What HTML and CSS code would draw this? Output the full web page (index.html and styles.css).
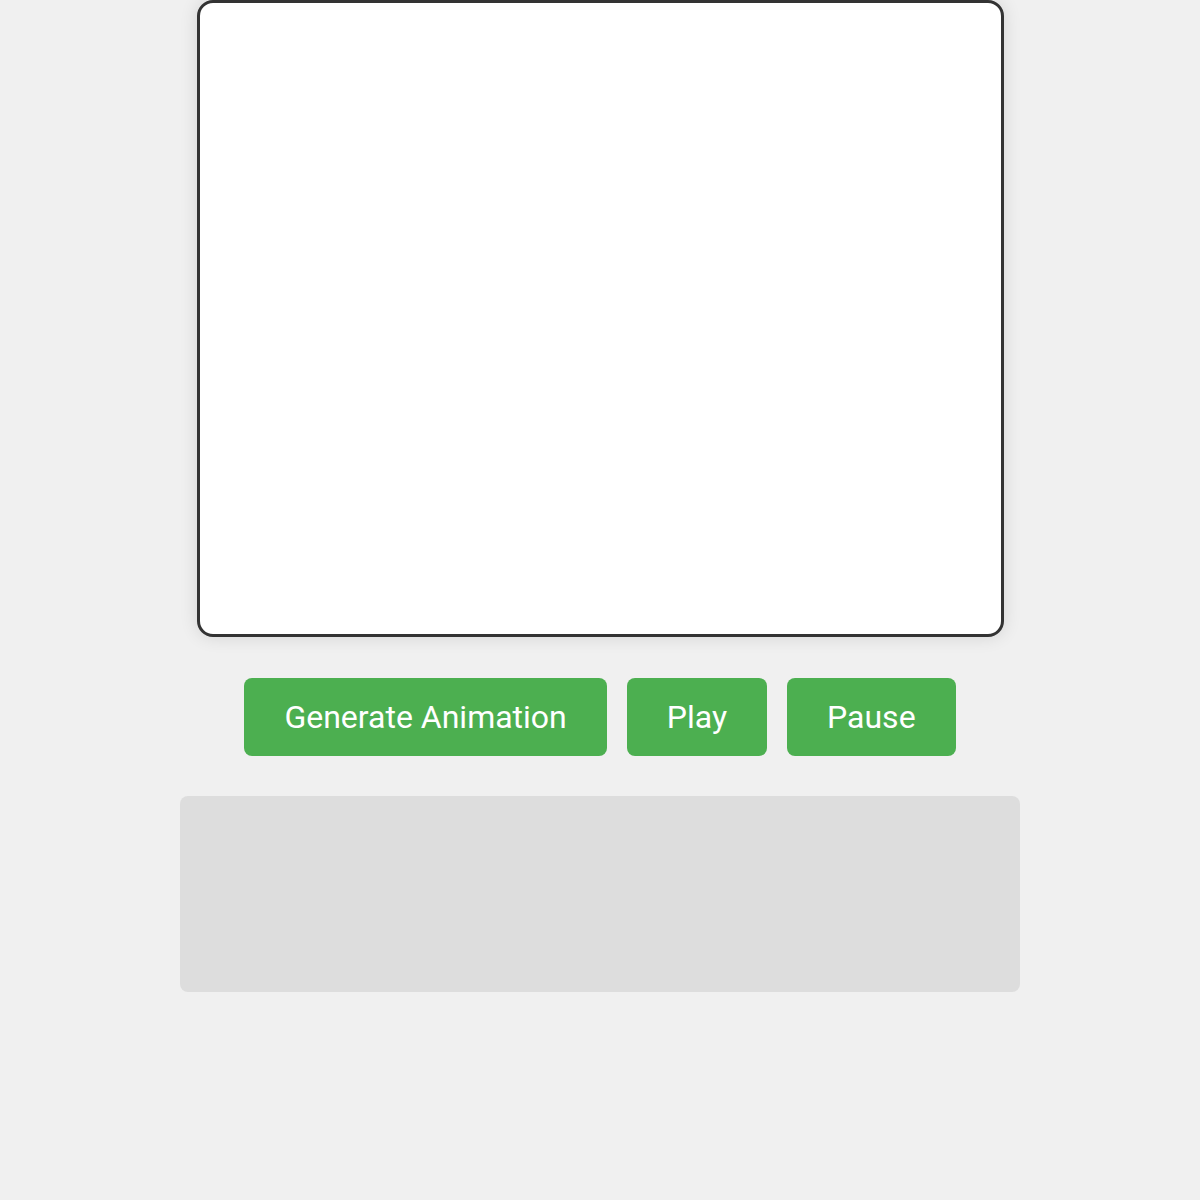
FILE: index.html
```html
<!DOCTYPE html>
<html>
<head>
<meta charset="utf-8">
<link rel="stylesheet" href="styles.css">
</head>
<body>
<main class="app">
  <div class="stage"></div>
  <div class="controls">
    <button class="btn">Generate Animation</button>
    <button class="btn">Play</button>
    <button class="btn">Pause</button>
  </div>
  <div class="output"></div>
</main>
</body>
</html>
```
FILE: styles.css
```css
html, body {
  margin: 0;
  padding: 0;
  background: #f0f0f0;
  font-family: Roboto, "Liberation Sans", sans-serif;
}
.app {
  display: flex;
  flex-direction: column;
  align-items: center;
}
.stage {
  width: 801px;
  height: 631px;
  border: 3px solid #333;
  border-radius: 16px;
  background: #fff;
  box-shadow: 0 0 18px rgba(0, 0, 0, 0.12);
}
.controls {
  display: flex;
  gap: 20px;
  margin-top: 41px;
}
.btn {
  height: 78px;
  padding: 0 40px;
  border: none;
  border-radius: 8px;
  background: #4caf50;
  color: #fff;
  font-family: Roboto, "Liberation Sans", sans-serif;
  font-size: 32px;
  line-height: 78px;
}
.output {
  width: 840px;
  height: 196px;
  margin-top: 40px;
  background: #ddd;
  border-radius: 8px;
}
```
